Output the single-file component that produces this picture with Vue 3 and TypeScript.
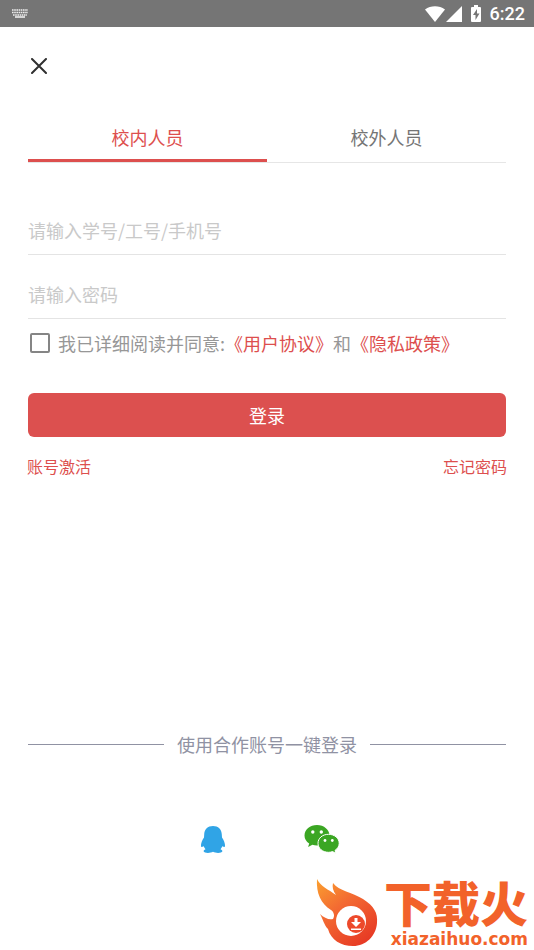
<script setup lang="ts">
import { ref } from 'vue'

const tabs: string[] = ['校内人员', '校外人员']
const activeTab = ref(0)
const account = ref('')
const password = ref('')
const agreed = ref(false)
</script>

<template>
  <div class="page">
    <header class="status">
      <svg class="keyboard" viewBox="0 0 16 9" aria-hidden="true">
        <path d="M0 1h16M0 3.5h16M1 6h14" stroke-dasharray="1.6 .6" />
        <path d="M3 8h10" />
      </svg>
      <div class="status-right">
        <svg class="wifi" viewBox="0 0 20 16" aria-hidden="true">
          <path d="M0 3.4C5.800-.9 14.200-.9 20 3.400L10 16Z" />
        </svg>
        <svg class="signal" viewBox="0 0 16 16" aria-hidden="true"><path d="M16 0v16H0Z" /></svg>
        <svg class="battery" viewBox="0 0 10 17" aria-hidden="true">
          <path d="M3 0h4v2h2q1 0 1 1v13q0 1-1 1H1q-1 0-1-1V3q0-1 1-1h2Z" />
          <path class="bolt" d="M6 4 2 10h2.500v5L8.500 8.500H6Z" />
        </svg>
        <time>6:22</time>
      </div>
    </header>

    <main>
      <button class="close" type="button" aria-label="关闭">
        <svg viewBox="0 0 16 16" aria-hidden="true"><path d="M1 1l14 14M15 1L1 15" /></svg>
      </button>

      <nav class="tabs">
        <button
          v-for="(tab, index) in tabs"
          :key="tab"
          type="button"
          :class="['tab', { active: activeTab === index }]"
          @click="activeTab = index"
        >{{ tab }}</button>
      </nav>

      <form @submit.prevent>
        <input v-model="account" class="field" type="text" aria-label="账号" placeholder="请输入学号/工号/手机号" />
        <input v-model="password" class="field" type="password" aria-label="密码" placeholder="请输入密码" />
        <div class="agree">
          <input id="agree" v-model="agreed" type="checkbox" />
          <label for="agree">我已详细阅读并同意:</label><a href="#terms">《用户协议》</a><span>和</span><a href="#privacy">《隐私政策》</a>
        </div>
        <button class="submit" type="submit">登录</button>
      </form>

      <div class="links">
        <a href="#activate">账号激活</a>
        <a href="#forgot">忘记密码</a>
      </div>

      <section class="partners">
        <div class="divider"><span>使用合作账号一键登录</span></div>
        <div class="icons">
          <button type="button" aria-label="QQ">
            <svg class="qq" viewBox="0 0 26 29" aria-hidden="true">
              <path d="M13 1C7.800 1 4.300 4.300 4.200 9.500L4 12.500C2.200 15 .8 18.500 1 20.800c.1 1.500.8 1.600 1.400.9l1.300-.5c.4 1.200 1 2.100 1.800 3.100-1.400.5-2 1.300-1.800 2.200.5 1.800 6.700 1.900 9.300.3 2.600 1.600 8.800 1.500 9.300-.3.2-.9-.4-1.700-1.800-2.200.8-1 1.400-1.900 1.800-3.100l1.300.5c.6.7 1.300.6 1.400-.9.2-2.300-1.200-5.800-3-8.300l-.2-3C21.700 4.300 18.200 1 13 1Z" />
            </svg>
          </button>
          <button type="button" aria-label="微信">
            <svg class="wechat" viewBox="0 0 36 30" aria-hidden="true">
              <path d="M13 1C6 1 .5 5.600.5 11.500c0 3.400 1.800 6.200 4.700 8.100L4.100 23l4.300-2.200c1.500.5 3 .7 4.600.7 7 0 12.500-4.400 12.500-10S20 1 13 1Z" />
              <path class="front" d="M24.500 10.300C18.500 10.300 14 14.200 14 19.300s4.500 9 10.500 9c1.500 0 2.900-.3 4.200-.7l3.200 1.900-.9-3.100c2.600-1.700 4.200-4.200 4.200-7.100 0-5.100-4.700-9-10.700-9Z" />
              <g class="eyes">
                <circle cx="8.800" cy="8" r="1.700" /><circle cx="17.300" cy="8" r="1.700" />
                <circle cx="21" cy="16.500" r="1.400" /><circle cx="28.300" cy="16.500" r="1.400" />
              </g>
            </svg>
          </button>
        </div>
      </section>
    </main>

    <footer class="brand">
      <svg class="flame" viewBox="0 0 62 68" aria-hidden="true">
        <defs>
          <linearGradient id="fire" x1="0" y1="0" x2=".7" y2="1">
            <stop offset="0" stop-color="#fba02f" />
            <stop offset=".45" stop-color="#f36a32" />
            <stop offset="1" stop-color="#e73b25" />
          </linearGradient>
        </defs>
        <path fill="url(#fire)" d="M1 0C5 8 12 10 20 16C17 12 16 8 17 4C23 12 36 13 47 20C58 27 62 34 61 44C60 57 50 67 37 67C25 67 15 61 12 50C8 46 7 40 4 35C8 39 13 41 17 40C19 37 18 33 15 31C5 25 0 14 1 0Z" />
        <circle cx="35" cy="42" r="15" fill="#fff" />
        <circle cx="40" cy="45" r="9" fill="#ed492b" />
        <path fill="#fff" d="M38.500 39h3v4h3.500l-5 5-5-5h3.500ZM35 49.500h10v1.500H35Z" />
      </svg>
      <div class="wordmark">
        <strong>下载火</strong>
        <span>xiazaihuo.com</span>
      </div>
    </footer>
  </div>
</template>

<style>
body { margin: 0; background: #fff; }
</style>

<style scoped>
.page {
  display: flex;
  flex-direction: column;
  min-height: 100vh;
  background: #fff;
  font-family: "Noto Sans CJK SC", sans-serif;
  font-size: 18px;
  line-height: 26px;
  color: #979797;
}
button { padding: 0; border: 0; background: none; font: inherit; cursor: pointer; }
svg { display: block; }
a { color: #dd4f4e; text-decoration: none; }

.status {
  display: flex;
  justify-content: space-between;
  align-items: center;
  height: 27px;
  padding: 0 9px 0 12px;
  background: #757575;
}
.keyboard { width: 16px; height: 9px; fill: none; stroke: #eee; stroke-width: 1.6; }
.status-right { display: flex; align-items: center; fill: #fff; }
.wifi { width: 20px; height: 16px; }
.signal { width: 16px; height: 16px; margin-left: 1px; }
.battery { width: 10px; height: 17px; margin: 0 9px; }
.bolt { fill: #757575; }
.status time { color: #fff; font-family: Roboto, sans-serif; font-weight: 500; }

main { padding: 0 28px; }
.close { display: block; margin: 28px 0 0; padding: 3px; }
.close svg { width: 16px; height: 16px; fill: none; stroke: #303030; stroke-width: 2; stroke-linecap: round; }

.tabs { display: flex; margin-top: 36px; border-bottom: 1px solid #e6e6e6; }
.tab { flex: 1; height: 49px; padding-top: 1px; border-bottom: 3px solid transparent; color: #757575; }
.tab.active { border-color: #dd4f4e; color: #dd4f4e; }

form { display: flex; flex-direction: column; padding-top: 44px; }
.field {
  box-sizing: border-box;
  width: 100%;
  height: 48px;
  margin-bottom: 16px;
  padding: 0 0 1px;
  border: 0;
  border-bottom: 1px solid #e4e4e4;
  outline: 0;
  background: none;
  font: inherit;
  color: #444;
}
.field::placeholder { color: #c9c9c9; opacity: 1; }
.agree { display: flex; align-items: center; margin-top: -5px; white-space: nowrap; }
.agree input {
  appearance: none;
  box-sizing: border-box;
  width: 20px;
  height: 20px;
  margin: 0 8px 0 2px;
  border: 2px solid #858585;
  border-radius: 2px;
}
.agree input:checked { background: #dd4f4e; }
.submit { height: 44px; margin-top: 37px; border-radius: 6px; background: #dc504f; color: #fff; }
.links { display: flex; justify-content: space-between; margin: 16px -1px 0; font-size: 16px; }

.partners { margin-top: 252px; }
.divider { display: flex; align-items: center; gap: 13px; color: #9092a3; }
.divider::before, .divider::after { content: ""; flex: 1; height: 1px; background: #9092a3; }
.icons { display: flex; justify-content: center; align-items: center; gap: 78px; margin-top: 67px; padding-left: 5px; }
.qq { width: 26px; height: 29px; fill: #30a4e6; }
.wechat { width: 36px; height: 30px; fill: #3ba623; }
.front { stroke: #fff; stroke-width: 1; }
.eyes { fill: #fff; }

.brand { display: flex; align-items: flex-end; gap: 6px; margin-top: auto; align-self: flex-end; padding: 0 6px 3px 0; color: #f2622a; }
.flame { width: 62px; height: 68px; }
.wordmark { display: flex; flex-direction: column; align-items: flex-end; gap: 6px; }
.wordmark strong { font-size: 48px; font-weight: 900; line-height: 48px; }
.wordmark span { font: bold 17px/16px "DejaVu Sans", sans-serif; }
</style>
